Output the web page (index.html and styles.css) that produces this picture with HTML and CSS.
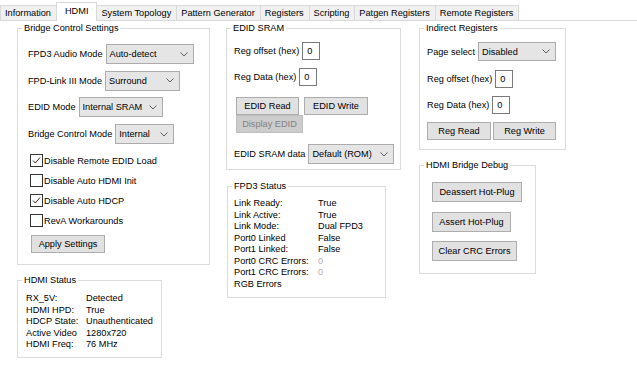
FILE: index.html
```html
<!DOCTYPE html>
<html lang="en">
  <head>
    <meta charset="UTF-8" />
    <title>HDMI</title>
    <link rel="stylesheet" href="styles.css">
  </head>
  <body>
    <div class="tabs">
      <div class="tab">Information</div>
      <div class="tab tab-active">HDMI</div>
      <div class="tab">System Topology</div>
      <div class="tab">Pattern Generator</div>
      <div class="tab">Registers</div>
      <div class="tab">Scripting</div>
      <div class="tab">Patgen Registers</div>
      <div class="tab">Remote Registers</div>
    </div>

    <div class="panel">
      <!-- left column -->
      <div class="col col-1">
        <fieldset class="group bridge">
          <legend>Bridge Control Settings</legend>
          <div class="group-body">
            <div class="combo-rows">
              <div class="row">
                <span>FPD3 Audio Mode</span>
                <div class="combo w-88"><span>Auto-detect</span><svg width="8" height="5" viewBox="0 0 8 5"><path d="M0.5 0.5 L4 4 L7.5 0.5" fill="none" stroke="#606060" /></svg></div>
              </div>
              <div class="row">
                <span>FPD-Link III Mode</span>
                <div class="combo w-75"><span>Surround</span><svg width="8" height="5" viewBox="0 0 8 5"><path d="M0.5 0.5 L4 4 L7.5 0.5" fill="none" stroke="#606060" /></svg></div>
              </div>
              <div class="row">
                <span>EDID Mode</span>
                <div class="combo w-84"><span>Internal SRAM</span><svg width="8" height="5" viewBox="0 0 8 5"><path d="M0.5 0.5 L4 4 L7.5 0.5" fill="none" stroke="#606060" /></svg></div>
              </div>
              <div class="row">
                <span>Bridge Control Mode</span>
                <div class="combo w-59"><span>Internal</span><svg width="8" height="5" viewBox="0 0 8 5"><path d="M0.5 0.5 L4 4 L7.5 0.5" fill="none" stroke="#606060" /></svg></div>
              </div>
            </div>

            <div class="checks">
              <div class="check">
                <span class="box"><svg width="9" height="9" viewBox="0 0 9 9"><path d="M1 4.5 L3.3 7 L8 1.5" fill="none" stroke="#333" stroke-width="1" /></svg></span>
                Disable Remote EDID Load
              </div>
              <div class="check">
                <span class="box"></span>
                Disable Auto HDMI Init
              </div>
              <div class="check">
                <span class="box"><svg width="9" height="9" viewBox="0 0 9 9"><path d="M1 4.5 L3.3 7 L8 1.5" fill="none" stroke="#333" stroke-width="1" /></svg></span>
                Disable Auto HDCP
              </div>
              <div class="check">
                <span class="box"></span>
                RevA Workarounds
              </div>
            </div>

            <button type="button" class="btn apply-btn">Apply Settings</button>
          </div>
        </fieldset>

        <fieldset class="group hdmi-status">
          <legend>HDMI Status</legend>
          <div class="group-body status hdmi-grid">
            <span>RX_5V:</span><span>Detected</span>
            <span>HDMI HPD:</span><span>True</span>
            <span>HDCP State:</span><span>Unauthenticated</span>
            <span>Active Video</span><span>1280x720</span>
            <span>HDMI Freq:</span><span>76 MHz</span>
          </div>
        </fieldset>
      </div>

      <!-- middle column -->
      <div class="col col-2">
        <fieldset class="group edid">
          <legend>EDID SRAM</legend>
          <div class="group-body">
            <div class="row">
              <span>Reg offset (hex)</span>
              <div class="textbox">0</div>
            </div>
            <div class="row row-2">
              <span>Reg Data (hex)</span>
              <div class="textbox">0</div>
            </div>
            <div class="edid-btns">
              <button type="button" class="btn w-63">EDID Read</button>
              <button type="button" class="btn w-64">EDID Write</button>
            </div>
            <button type="button" class="btn btn-disabled w-67">Display EDID</button>
            <div class="row row-sram">
              <span>EDID SRAM data</span>
              <div class="combo w-86"><span>Default (ROM)</span><svg width="8" height="5" viewBox="0 0 8 5"><path d="M0.5 0.5 L4 4 L7.5 0.5" fill="none" stroke="#606060" /></svg></div>
            </div>
          </div>
        </fieldset>

        <fieldset class="group fpd3">
          <legend>FPD3 Status</legend>
          <div class="group-body status fpd3-grid">
            <span>Link Ready:</span><span>True</span>
            <span>Link Active:</span><span>True</span>
            <span>Link Mode:</span><span>Dual FPD3</span>
            <span>Port0 Linked</span><span>False</span>
            <span>Port1 Linked:</span><span>False</span>
            <span>Port0 CRC Errors:</span><span class="muted">0</span>
            <span>Port1 CRC Errors:</span><span class="muted">0</span>
            <span>RGB Errors</span><span></span>
          </div>
        </fieldset>
      </div>

      <!-- right column -->
      <div class="col col-3">
        <fieldset class="group indirect">
          <legend>Indirect Registers</legend>
          <div class="group-body">
            <div class="row">
              <span>Page select</span>
              <div class="combo combo-page w-78"><span>Disabled</span><svg width="8" height="5" viewBox="0 0 8 5"><path d="M0.5 0.5 L4 4 L7.5 0.5" fill="none" stroke="#606060" /></svg></div>
            </div>
            <div class="row row-off">
              <span>Reg offset (hex)</span>
              <div class="textbox">0</div>
            </div>
            <div class="row row-data">
              <span>Reg Data (hex)</span>
              <div class="textbox">0</div>
            </div>
            <div class="reg-btns">
              <button type="button" class="btn w-64">Reg Read</button>
              <button type="button" class="btn w-63">Reg Write</button>
            </div>
          </div>
        </fieldset>

        <fieldset class="group debug">
          <legend>HDMI Bridge Debug</legend>
          <div class="group-body debug-btns">
            <button type="button" class="btn btn-tall w-90">Deassert Hot-Plug</button>
            <button type="button" class="btn btn-tall w-79">Assert Hot-Plug</button>
            <button type="button" class="btn btn-tall w-85">Clear CRC Errors</button>
          </div>
        </fieldset>
      </div>
    </div>
  </body>
</html>
```

FILE: styles.css
```css
* {
  margin: 0;
  padding: 0;
  box-sizing: border-box;
}
body {
  background-color: #fff;
  color: #000;
  font-family: "Liberation Sans", Arial, sans-serif;
  font-size: 9.2px;
  width: 637px;
  height: 378px;
  overflow: hidden;
}

/* ===tabs=== */
.tabs {
  display: flex;
  align-items: flex-end;
  height: 20px;
}
.tab {
  height: 15px;
  line-height: 14px;
  padding: 0 5px 0 4px;
  background-color: #f0f0f0;
  border: 1px solid #d9d9d9;
  border-bottom: none;
  margin-right: -1px;
  white-space: nowrap;
}
.tab-active {
  position: relative;
  height: 19px;
  margin-bottom: -1px;
  padding: 0 8px;
  line-height: 16px;
  background-color: #fff;
  z-index: 1;
}
.panel {
  display: flex;
  gap: 16px;
  padding-left: 17px;
  padding-top: 1px;
  border-top: 1px solid #d9d9d9;
  height: 358px;
}
.col {
  display: flex;
  flex-direction: column;
}
.col-1 {
  width: 193px;
  gap: 9px;
}
.col-2 {
  width: 175px;
  gap: 10px;
}
.col-3 {
  width: 147px;
  gap: 9px;
  margin-left: 2px;
}

/* ===group boxes=== */
.group {
  border: 1px solid #dcdcdc;
  padding: 0;
}
.group legend {
  margin-left: 4px;
  padding: 0 2px;
  line-height: 12px;
}
.bridge {
  height: 243px;
}
.bridge .group-body {
  padding: 10px 0 0 10px;
}
.hdmi-status {
  width: 145px;
  height: 84px;
}
.edid {
  height: 148px;
}
.edid .group-body {
  padding: 8px 0 0 7px;
}
.fpd3 {
  width: 159px;
  height: 118px;
  margin-left: 1px;
}
.indirect {
  height: 128px;
}
.indirect .group-body {
  padding: 8px 0 0 7px;
}
.debug {
  width: 117px;
  height: 115px;
}

/* ===rows=== */
.row {
  display: flex;
  align-items: center;
  gap: 3px;
  white-space: nowrap;
}
.combo-rows {
  display: flex;
  flex-direction: column;
  gap: 6.7px;
}
.combo {
  display: flex;
  align-items: center;
  justify-content: space-between;
  height: 20px;
  padding: 0 5px 0 3px;
  background-color: #e5e5e5;
  border: 1px solid #acacac;
}
.combo-page {
  height: 19px;
}
.textbox {
  width: 18px;
  height: 18px;
  line-height: 16px;
  padding-left: 4px;
  background-color: #fff;
  border: 1px solid #7a7a7a;
}
.row-2 {
  margin-top: 8px;
}
.row-sram {
  margin-top: 11px;
}
.row-off {
  margin-top: 9px;
}
.row-data {
  margin-top: 8px;
}

/* ===checkboxes=== */
.checks {
  display: flex;
  flex-direction: column;
  gap: 7px;
  margin: 10px 0 0 2px;
}
.check {
  display: flex;
  align-items: center;
  height: 13px;
  white-space: nowrap;
}
.box {
  display: flex;
  align-items: center;
  justify-content: center;
  width: 13px;
  height: 13px;
  margin-right: 1px;
  background-color: #fff;
  border: 1px solid #333;
}

/* ===buttons=== */
.btn {
  display: block;
  height: 18px;
  background-color: #e1e1e1;
  border: 1px solid #adadad;
  font-family: inherit;
  font-size: inherit;
  color: #000;
  white-space: nowrap;
}
.btn-tall {
  height: 20px;
}
.btn-disabled {
  background-color: #cccccc;
  border-color: #bfbfbf;
  color: #838383;
}
.apply-btn {
  width: 74px;
  margin: 8px 0 0 3px;
}
.edid-btns {
  display: flex;
  gap: 5px;
  margin: 11px 0 0 2px;
}
.edid-btns + .btn {
  margin-left: 2px;
}
.reg-btns {
  display: flex;
  gap: 2px;
  margin-top: 8px;
}
.debug-btns {
  display: flex;
  flex-direction: column;
  gap: 9.5px;
  padding: 11px 0 0 12px;
}

/* ===status grids=== */
.status {
  display: grid;
  line-height: 11.5px;
  white-space: nowrap;
}
.hdmi-grid {
  grid-template-columns: 60px auto;
  padding: 7px 0 0 8px;
}
.fpd3-grid {
  grid-template-columns: 84px auto;
  padding: 6px 0 0 6px;
}
.muted {
  color: #b0b0b0;
}

.w-59 { width: 59px; }
.w-63 { width: 63px; }
.w-64 { width: 64px; }
.w-67 { width: 67px; }
.w-75 { width: 75px; }
.w-78 { width: 78px; }
.w-79 { width: 79px; }
.w-84 { width: 84px; }
.w-85 { width: 85px; }
.w-86 { width: 86px; }
.w-88 { width: 88px; }
.w-90 { width: 90px; }
```
